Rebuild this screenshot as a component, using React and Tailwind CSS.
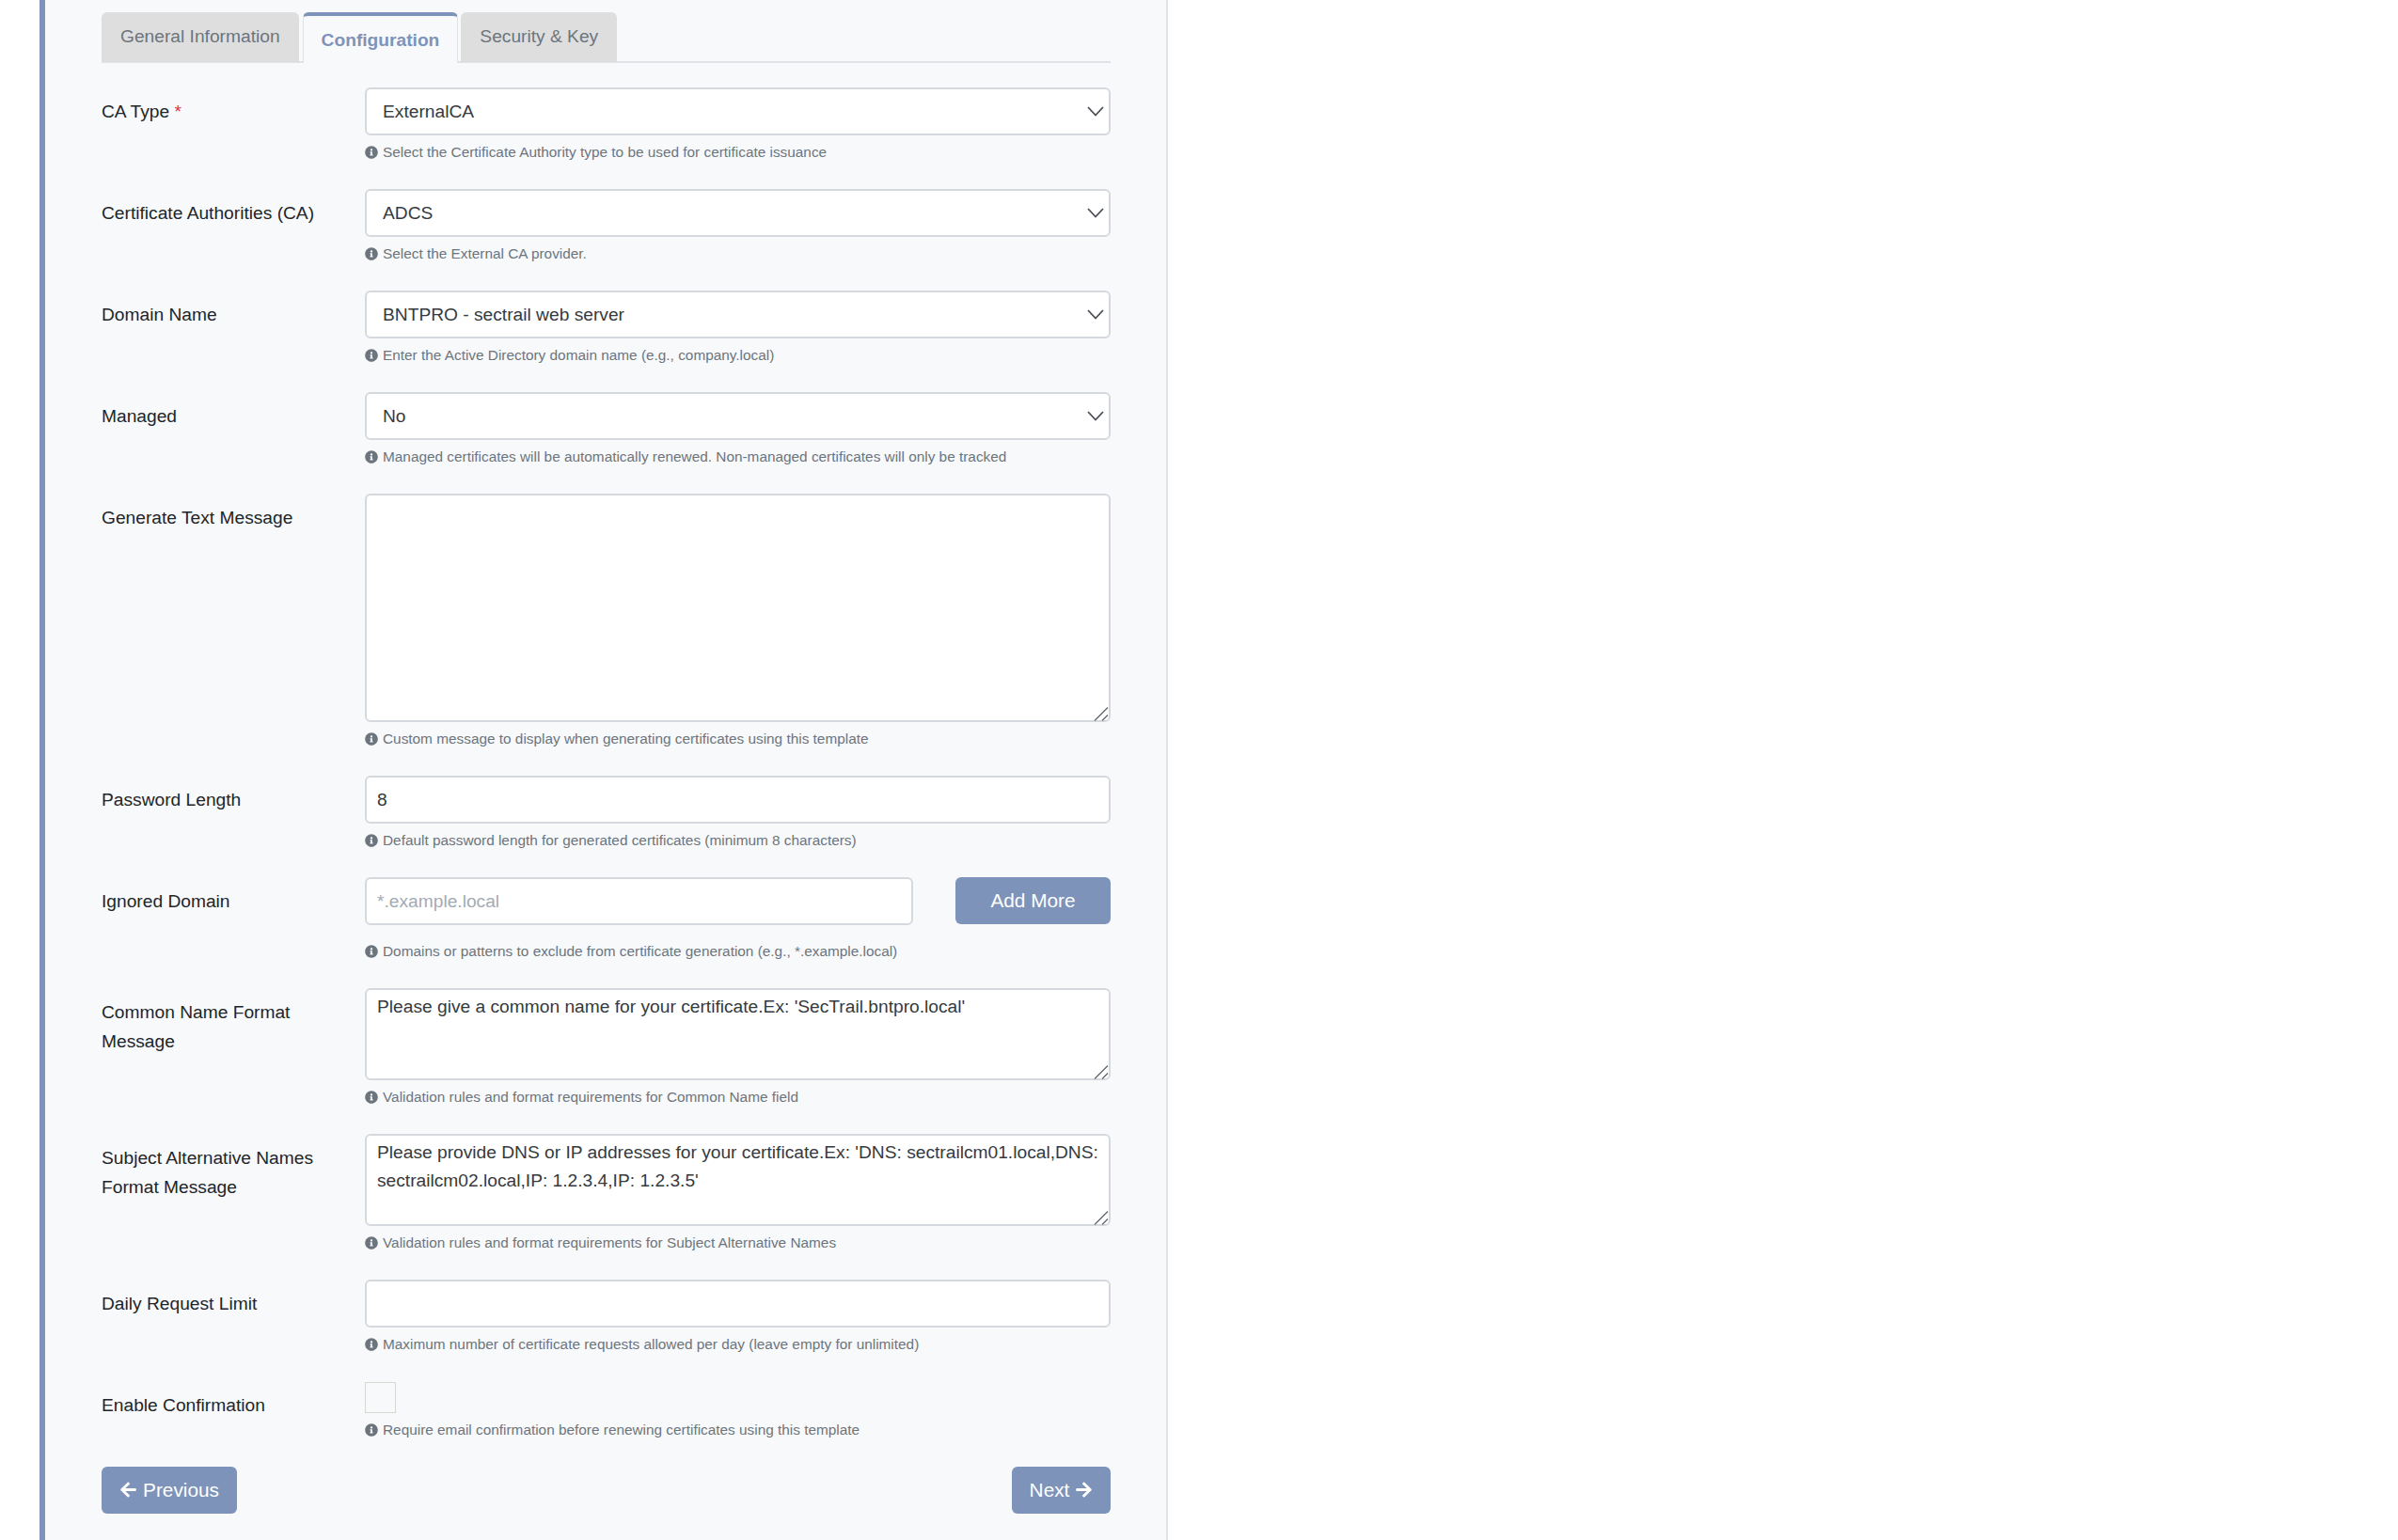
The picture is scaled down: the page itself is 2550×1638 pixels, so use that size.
import React from "react";
import { FaInfoCircle, FaArrowLeft, FaArrowRight } from "react-icons/fa";

function Hint({ children }) {
  return (
    <div className="flex items-center h-[27px] pt-[9px] text-[15.36px] text-[#6c757d]">
      <FaInfoCircle className="w-[14px] h-[14px] mr-[5px] shrink-0" />
      <span>{children}</span>
    </div>
  );
}

function Row({ label, hint, children, extra }) {
  return (
    <div className="flex items-start mb-[30px]">
      <label className="w-[280px] shrink-0 pt-[10px] pr-[20px] text-[19.2px] leading-[31px] text-[#212529]">{label}</label>
      <div className="flex-1 min-w-0">
        {children}
        <div className={extra ? "mt-[10px]" : ""}>
          <Hint>{hint}</Hint>
        </div>
      </div>
    </div>
  );
}

function Sel({ value }) {
  return (
    <div className="relative">
      <select
        defaultValue={value}
        className="block w-full h-[51px] appearance-none bg-white border-2 border-[#d5d9de] rounded-[6px] pl-[17px] pr-[40px] pt-[2px] text-[19.2px] text-[#343a40] outline-none"
      >
        <option>{value}</option>
      </select>
      <svg viewBox="0 0 18 11" className="absolute right-[7px] top-[20px] w-[18px] h-[11px]" fill="none" stroke="#4b4f56" strokeWidth="1.8">
        <path d="M1 1l8 8.5L17 1" />
      </svg>
    </div>
  );
}

const fieldCls =
  "block w-full bg-white border-2 border-[#d5d9de] rounded-[6px] px-[11px] text-[19.2px] text-[#343a40] outline-none placeholder:text-[#a4abb2]";

function Area({ h, value }) {
  return (
    <div className="relative">
      <textarea
        defaultValue={value}
        className={`${fieldCls} !pr-[4px] pt-[3px] leading-[30px] resize-none ${h}`}
      />
      <svg viewBox="0 0 16 16" className="absolute right-[2px] bottom-[1px] w-[16px] h-[16px] pointer-events-none" fill="none" stroke="#666a70" strokeWidth="1.4">
        <path d="M1 15.5L15 1.5M9 15.5L15 9.5" />
      </svg>
    </div>
  );
}

function Tab({ children, active }) {
  return active ? (
    <div className="h-[54px] mb-[-2px] px-[19px] pt-[12px] mr-[3px] bg-[#f8f9fb] border-t-[4px] border-x border-t-[#7d93ba] border-x-[#dfe2e6] rounded-t-[6px] text-[19.2px] font-bold text-[#7d93ba]">
      {children}
    </div>
  ) : (
    <div className="h-[53px] px-[20px] pt-[12px] mr-[4px] bg-[#dedede] rounded-t-[6px] text-[19.2px] text-[#6c757d]">
      {children}
    </div>
  );
}

function Btn({ children, cls }) {
  return (
    <button className={`h-[50px] bg-[#7d93ba] rounded-[6px] text-white text-[20.8px] flex items-center justify-center ${cls}`}>
      {children}
    </button>
  );
}

export default function App() {
  return (
    <div className="flex h-[1638px] overflow-hidden bg-white font-['Liberation_Sans',Arial,sans-serif]">
      <div className="ml-[42px] w-[1200px] shrink-0 bg-[#f8f9fb] border-l-[6px] border-l-[#7d93ba] border-r-2 border-r-[#e0e3e7] pl-[60px] pr-[59px] pt-[13px]">
        <div className="flex border-b-2 border-[#dfe2e6] h-[53.5px] mb-[26px]">
          <Tab>General Information</Tab>
          <Tab active>Configuration</Tab>
          <Tab>Security &amp; Key</Tab>
        </div>

        <Row
          label={<>CA Type <span className="text-[#dc3545]">*</span></>}
          hint="Select the Certificate Authority type to be used for certificate issuance"
        >
          <Sel value="ExternalCA" />
        </Row>
        <Row label="Certificate Authorities (CA)" hint="Select the External CA provider.">
          <Sel value="ADCS" />
        </Row>
        <Row label="Domain Name" hint="Enter the Active Directory domain name (e.g., company.local)">
          <Sel value="BNTPRO - sectrail web server" />
        </Row>
        <Row label="Managed" hint="Managed certificates will be automatically renewed. Non-managed certificates will only be tracked">
          <Sel value="No" />
        </Row>
        <Row label="Generate Text Message" hint="Custom message to display when generating certificates using this template">
          <Area h="h-[243px]" value="" />
        </Row>
        <Row label="Password Length" hint="Default password length for generated certificates (minimum 8 characters)">
          <input className={`${fieldCls} h-[51px] pt-[2px]`} defaultValue="8" />
        </Row>
        <Row label="Ignored Domain" extra hint="Domains or patterns to exclude from certificate generation (e.g., *.example.local)">
          <div className="flex items-start justify-between">
            <input className={`${fieldCls} h-[51px] pt-[2px] !w-[583px]`} placeholder="*.example.local" />
            <Btn cls="w-[165px]">Add More</Btn>
          </div>
        </Row>
        <Row label="Common Name Format Message" hint="Validation rules and format requirements for Common Name field">
          <Area h="h-[98px]" value="Please give a common name for your certificate.Ex: 'SecTrail.bntpro.local'" />
        </Row>
        <Row label="Subject Alternative Names Format Message" hint="Validation rules and format requirements for Subject Alternative Names">
          <Area h="h-[98px]" value="Please provide DNS or IP addresses for your certificate.Ex: 'DNS: sectrailcm01.local,DNS: sectrailcm02.local,IP: 1.2.3.4,IP: 1.2.3.5'" />
        </Row>
        <Row label="Daily Request Limit" hint="Maximum number of certificate requests allowed per day (leave empty for unlimited)">
          <input className={`${fieldCls} h-[51px]`} />
        </Row>
        <Row label="Enable Confirmation" hint="Require email confirmation before renewing certificates using this template">
          <div className="mt-[1px] w-[33px] h-[33px] bg-[#f8f9fb] border border-[#d9d5d0]" />
        </Row>

        <div className="flex justify-between">
          <Btn cls="w-[144px]"><FaArrowLeft className="w-[19px] h-[19px] mr-[6px]" />Previous</Btn>
          <Btn cls="w-[105px]">Next<FaArrowRight className="w-[19px] h-[19px] ml-[6px]" /></Btn>
        </div>
      </div>
    </div>
  );
}
